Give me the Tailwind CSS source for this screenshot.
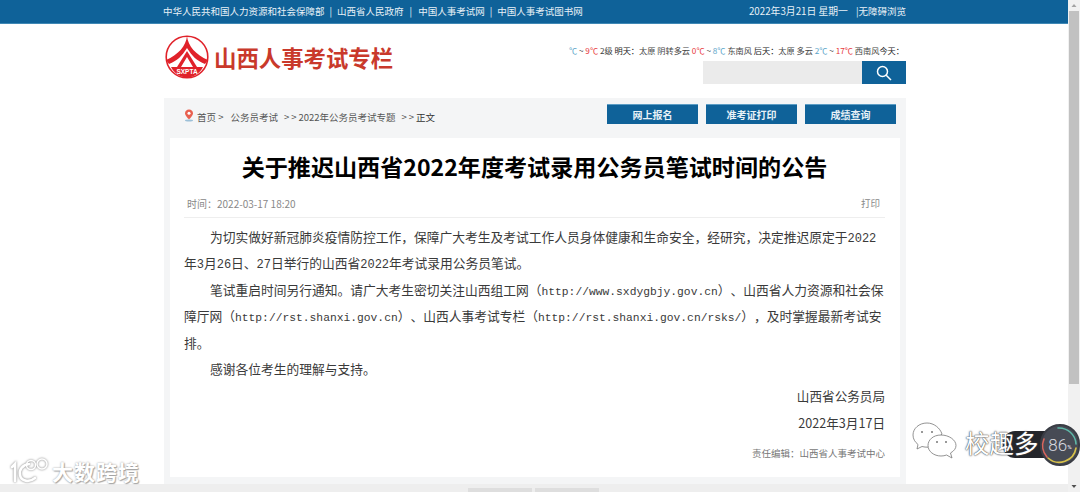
<!doctype html>
<html lang="zh-CN">
<head>
<meta charset="utf-8">
<title>关于推迟山西省2022年度考试录用公务员笔试时间的公告</title>
<script src="https://cdn.jsdelivr.net/npm/@tailwindcss/browser@4"></script>
</head>
<body class="relative overflow-hidden h-[492px] bg-white font-['Noto_Sans_CJK_SC','Noto_Sans',sans-serif] text-[#333]">
<div class="flex h-[492px]">
  <!-- page -->
  <div class="flex-1 flex flex-col min-w-0">
    <div class="h-[24px] shrink-0 bg-[#0f6299] border-b border-[#3f88b5] text-[9.5px] text-[#e8f1f7]">
      <div class="w-[742px] ml-[163px] h-full flex items-center justify-between">
        <div class="flex items-center gap-[5px]">
          <span>中华人民共和国人力资源和社会保障部</span><span>|</span>
          <span>山西省人民政府</span><span class="ml-[1px]">|</span>
          <span class="ml-[1px]">中国人事考试网</span><span>|</span>
          <span>中国人事考试图书网</span>
        </div>
        <div class="flex items-center mr-[-1px]">
          <span class="text-[9.8px]">2022年3月21日 星期一</span><span class="ml-[8px]">|无障碍浏览</span>
        </div>
      </div>
    </div>

    <div class="w-[742px] ml-[164px] h-[74px] shrink-0 flex justify-between">
      <div class="flex items-center gap-[4px] h-[66px]">
        <svg class="w-[46px] h-[46px]" viewBox="0 0 46 46">
          <circle cx="23" cy="23" r="20.8" fill="none" stroke="#e0222a" stroke-width="1.6"/>
          <path d="M23 2 C24 12 32 21 44 26 L41 30 C33 27 28 22 23 14 C18 22 13 27 5 30 L2 26 C14 21 22 12 23 2Z" fill="#e0222a"/>
          <path d="M23 17 L33 33 H29 L23 23 L17 33 H13Z" fill="#e0222a"/>
          <path d="M7 33 H39 C36 39 30 43.5 23 43.5 C16 43.5 10 39 7 33Z" fill="#e0222a"/>
          <text x="23" y="40" text-anchor="middle" font-family="Liberation Sans" font-size="6.5" font-weight="700" fill="#fff">SXPTA</text>
        </svg>
        <span class="text-[22.4px] leading-none font-bold text-[#c9392b]">山西人事考试专栏</span>
      </div>
      <div class="flex flex-col items-end pt-[19px]">
        <p class="text-[8.2px] leading-[14px] whitespace-nowrap text-[#444] mr-[2px]">
          <span class="text-[#5aa5c9]">℃</span> ~ <span class="text-[#e8383d]">9℃</span> 2级 <span class="text-[#222]">明天：</span>太原 阴转多云 <span class="text-[#e8383d]">0℃</span> ~ <span class="text-[#5aa5c9]">8℃</span> 东南风 <span class="text-[#222]">后天：</span>太原 多云 <span class="text-[#5aa5c9]">2℃</span> ~ <span class="text-[#e8383d]">17℃</span> 西南风<span class="text-[#222]">今天：</span>
        </p>
        <div class="flex mt-[4px] h-[23px]">
          <div class="w-[159px] bg-[#ebebeb]"></div>
          <div class="w-[44px] bg-[#0f6299] flex items-center justify-center">
            <svg class="w-[16px] h-[16px]" viewBox="0 0 16 16" fill="none" stroke="#fff" stroke-width="1.5">
              <circle cx="6.5" cy="6.5" r="5"/><path d="M10.2 10.2 L15 15"/>
            </svg>
          </div>
        </div>
      </div>
    </div>

    <div class="w-[742px] ml-[164px] flex-1 bg-[#f4f5f6] px-[6px] flex flex-col min-h-0">
      <div class="h-[40px] shrink-0 flex items-start justify-between pl-[14px] pr-[4px] pt-[6px]">
        <div class="flex items-center mt-[7px] text-[9.5px] leading-[12px] text-[#555] whitespace-nowrap">
          <svg class="w-[10px] h-[13px] mr-[3px] -mt-[3px]" viewBox="0 0 10 13">
            <path d="M5 0.5 C2.5 0.5 1 2.3 1 4.3 C1 6.8 5 10.5 5 10.5 C5 10.5 9 6.8 9 4.3 C9 2.3 7.5 0.5 5 0.5Z" fill="#e8604f"/>
            <circle cx="5" cy="4.2" r="1.5" fill="#fff"/>
            <ellipse cx="5" cy="11.5" rx="4" ry="1" fill="#9cc0d8"/>
          </svg>
          <span>首页 &gt;</span>
          <span class="ml-[7px]">公务员考试</span>
          <span class="ml-[6px]"><span class="tracking-[2px]">&gt;&gt;</span>2022年公务员考试专题</span>
          <span class="ml-[6px]"><span class="tracking-[2px]">&gt;&gt;</span><span class="text-[#333]">正文</span></span>
        </div>
        <div class="flex gap-[8px] text-[10px] font-bold text-[#e8f1f7]">
          <div class="w-[91px] h-[20px] bg-[#0f6299] border-t border-[#5b9cc4] flex items-center justify-center">网上报名</div>
          <div class="w-[91px] h-[20px] bg-[#0f6299] border-t border-[#5b9cc4] flex items-center justify-center">准考证打印</div>
          <div class="w-[91px] h-[20px] bg-[#0f6299] border-t border-[#5b9cc4] flex items-center justify-center">成绩查询</div>
        </div>
      </div>

      <div class="h-[339px] shrink-0 bg-white pl-[14px] pr-[15px]">
        <h1 class="pt-[13px] text-center text-[23.1px] leading-[30px] font-bold text-black whitespace-nowrap">关于推迟山西省2022年度考试录用公务员笔试时间的公告</h1>
        <div class="mt-[12px] h-[20px] pb-[4px] pl-[3px] pr-[5px] flex justify-between items-center border-b border-[#eee] text-[9.5px] text-[#888] box-content">
          <span class="text-[10px]">时间：2022-03-17 18:20</span><span>打印</span>
        </div>
        <div class="text-[12.75px] leading-[26.4px] text-[#3a3a3a] pt-[6px] whitespace-nowrap [text-spacing-trim:space-all]">
          <p class="pl-[26px]">为切实做好新冠肺炎疫情防控工作，保障广大考生及考试工作人员身体健康和生命安全，经研究，决定推迟原定于<span class="font-['Liberation_Mono'] text-[12px] leading-none">2022</span></p>
          <p>年<span class="font-['Liberation_Mono'] text-[12px] leading-none">3</span>月<span class="font-['Liberation_Mono'] text-[12px] leading-none">26</span>日、<span class="font-['Liberation_Mono'] text-[12px] leading-none">27</span>日举行的山西省<span class="font-['Liberation_Mono'] text-[12px] leading-none">2022</span>年考试录用公务员笔试。</p>
          <p class="pl-[26px]">笔试重启时间另行通知。请广大考生密切关注山西组工网（<span class="font-['Liberation_Mono'] text-[11.3px] leading-none">http://www.sxdygbjy.gov.cn</span>）、山西省人力资源和社会保</p>
          <p>障厅网（<span class="font-['Liberation_Mono'] text-[11.3px] leading-none">http://rst.shanxi.gov.cn</span>）、山西人事考试专栏（<span class="font-['Liberation_Mono'] text-[11.3px] leading-none">http://rst.shanxi.gov.cn/rsks/</span>），及时掌握最新考试安</p>
          <p>排。</p>
          <p class="pl-[26px]">感谢各位考生的理解与支持。</p>
          <p class="text-right text-[12.6px] pt-[1px]">山西省公务员局</p>
          <p class="text-right text-[12.6px]">2022年3月17日</p>
          <p class="text-right text-[9.5px] text-[#777] leading-[34px]">责任编辑：山西省人事考试中心</p>
        </div>
      </div>
      <div class="h-[7px] shrink-0"></div>
    </div>

    <div class="h-[8px] shrink-0 bg-[#eeeeee] flex justify-center gap-[3px] pt-[4px] pr-[1px]">
      <div class="w-[64px] bg-[#dedede]"></div>
      <div class="w-[64px] bg-[#dedede]"></div>
    </div>
  </div>

  <!-- scrollbar -->
  <div class="w-[12px] shrink-0 bg-[#f1f1f1] flex flex-col items-center">
    <svg class="w-[12px] h-[11px] shrink-0" viewBox="0 0 12 11"><path d="M3.5 7 L6 4 L8.5 7Z" fill="#a3a3a3"/></svg>
    <div class="w-[10px] h-[373px] bg-[#c1c1c1]"></div>
    <div class="flex-1"></div>
    <svg class="w-[12px] h-[11px] shrink-0" viewBox="0 0 12 11"><path d="M3.5 4 L8.5 4 L6 7Z" fill="#505050"/></svg>
  </div>
</div>

<!-- watermark: bottom left -->
<div class="absolute left-[9px] top-[458px] flex items-center">
  <svg class="w-[40px] h-[26px] drop-shadow-[0_0_1px_#777]" viewBox="0 0 40 26" fill="none" stroke="#fff" stroke-width="2.6" stroke-linecap="round">
    <path d="M3 9 L6 6 V23" />
    <path d="M20 6 C13 7 10 12 11 17 C12 23 20 25 26 20" />
    <circle cx="22" cy="7" r="4.5" stroke-width="1.5"/>
    <circle cx="33" cy="6" r="5" stroke-width="1.5"/>
  </svg>
  <span class="ml-[3px] text-[21px] leading-none font-bold text-white tracking-[1px] [text-shadow:0_0_2px_#999,1px_1px_1px_#aaa]">大数跨境</span>
</div>

<!-- watermark: bottom right -->
<div class="absolute left-[1003px] top-[431px] w-[50px] h-[27px] rounded-l-[12px] bg-[#24262b]"></div>
<div class="absolute left-[1040px] top-[424px] w-[40px] h-[42px] rounded-full bg-[#474b55] border-[2px] border-[#3a3d45] flex items-center justify-center text-[#d9dbe0] font-['Roboto'] font-light text-[17px] leading-none">
  86<span class="text-[6px] font-bold mt-[4px]">%</span>
</div>
<svg class="absolute left-[1040px] top-[424px] w-[40px] h-[42px]" viewBox="0 0 40 42" fill="none" stroke-width="1.6" stroke-linecap="round">
  <path d="M18 4 A17 17 0 0 1 36 20" stroke="#5fb8a8"/>
  <path d="M36 24 A17 17 0 0 1 8 34" stroke="#d8c24a"/>
  <path d="M7 33 A17 17 0 0 1 4 15" stroke="#d9655c"/>
</svg>
<svg class="absolute left-[912px] top-[422px] w-[46px] h-[40px]" viewBox="0 0 46 40" fill="#fff" stroke="#777" stroke-width="0.8">
  <path d="M15 1 C7 1 1 6.5 1 13 C1 17 3 20 6 22.5 L5 27 L10 24.5 C12 25 14 25.3 16 25.2 L30 12 C28 6 22 1 15 1Z"/>
  <path d="M29 13 C21 13 16 18 16 23.5 C16 29.5 22 34 29 34 C31 34 33 33.7 34.5 33 L40 36 L38.5 31 C42 29 44 26.5 44 23.5 C44 18 37 13 29 13Z"/>
  <circle cx="10" cy="10" r="1" fill="#777" stroke="none"/><circle cx="20" cy="10" r="1" fill="#777" stroke="none"/>
  <circle cx="25" cy="20" r="1" fill="#777" stroke="none"/><circle cx="34" cy="20" r="1" fill="#777" stroke="none"/>
</svg>
<div class="absolute left-[965px] top-[428px] text-[24.5px] leading-[30px] text-white whitespace-nowrap [text-shadow:0_0_1px_#333,0_0_2px_#555]">校趣多</div>
</body>
</html>
